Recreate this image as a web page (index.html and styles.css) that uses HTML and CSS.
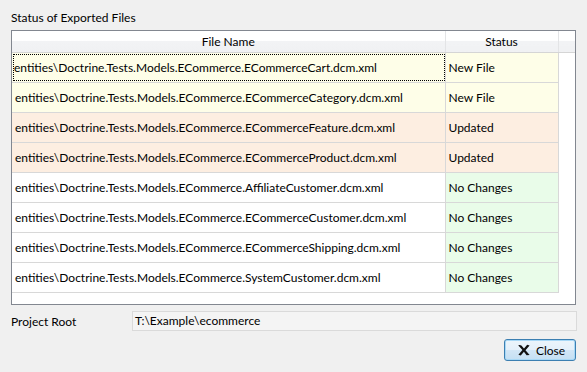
FILE: index.html
```html
<!DOCTYPE html>
<html lang="en">
<head>
  <meta charset="UTF-8" />
  <title>Export Status</title>
  <link rel="stylesheet" href="styles.css">
</head>
<body>
  <div class="dialog">
    <div class="group-label">Status of Exported Files</div>
    <div class="grid">
      <table>
        <colgroup>
          <col class="col-name">
          <col class="col-status">
          <col>
        </colgroup>
        <thead>
          <tr>
            <th>File Name</th>
            <th>Status</th>
            <th></th>
          </tr>
        </thead>
        <tbody>
          <tr class="new">
            <td><span class="focus">entities\Doctrine.Tests.Models.ECommerce.ECommerceCart.dcm.xml</span></td>
            <td>New File</td>
            <td class="filler"></td>
          </tr>
          <tr class="new">
            <td>entities\Doctrine.Tests.Models.ECommerce.ECommerceCategory.dcm.xml</td>
            <td>New File</td>
            <td class="filler"></td>
          </tr>
          <tr class="updated">
            <td>entities\Doctrine.Tests.Models.ECommerce.ECommerceFeature.dcm.xml</td>
            <td>Updated</td>
            <td class="filler"></td>
          </tr>
          <tr class="updated">
            <td>entities\Doctrine.Tests.Models.ECommerce.ECommerceProduct.dcm.xml</td>
            <td>Updated</td>
            <td class="filler"></td>
          </tr>
          <tr class="same">
            <td>entities\Doctrine.Tests.Models.ECommerce.AffiliateCustomer.dcm.xml</td>
            <td>No Changes</td>
            <td class="filler"></td>
          </tr>
          <tr class="same">
            <td>entities\Doctrine.Tests.Models.ECommerce.ECommerceCustomer.dcm.xml</td>
            <td>No Changes</td>
            <td class="filler"></td>
          </tr>
          <tr class="same">
            <td>entities\Doctrine.Tests.Models.ECommerce.ECommerceShipping.dcm.xml</td>
            <td>No Changes</td>
            <td class="filler"></td>
          </tr>
          <tr class="same">
            <td>entities\Doctrine.Tests.Models.ECommerce.SystemCustomer.dcm.xml</td>
            <td>No Changes</td>
            <td class="filler"></td>
          </tr>
        </tbody>
      </table>
    </div>
    <div class="field-row">
      <label>Project Root</label>
      <div class="textbox">T:\Example\ecommerce</div>
    </div>
    <div class="buttons">
      <button class="close-btn">
        <svg width="14" height="12" viewBox="0 0 14 12">
          <path d="M1.2 1.2 Q3 0.6 4.4 1.4 L7 4.6 L10.2 0.8 L12.6 1.4 L8.5 6.2 L12.6 11 L9.6 11.2 L6.9 7.8 L3.8 11.4 L1.4 10.8 L5.4 6.1 Z" fill="#111"/>
        </svg>
        Close
      </button>
    </div>
  </div>
</body>
</html>
```

FILE: styles.css
```css
body {
  margin: 0;
  background-color: #f0f0f0;
  font-family: Lato, 'Noto Sans', sans-serif;
  font-size: 12px;
  color: #000;
}

.dialog {
  display: flex;
  flex-direction: column;
  padding: 9px 11px 0 11px;
}

.group-label {
  height: 21px;
  line-height: 17px;
}

.grid {
  height: 273px;
  border: 1px solid #828790;
  background-color: #fff;
  overflow: hidden;
}

table {
  width: 100%;
  border-collapse: collapse;
  table-layout: fixed;
}

.col-name {
  width: 433px;
}

.col-status {
  width: 113px;
}

th {
  height: 21px;
  padding: 0;
  font-weight: normal;
  text-align: center;
  background: linear-gradient(#ffffff 0%, #ffffff 45%, #f2f3f5 50%, #f0f1f3 100%);
  border-right: 1px solid #e3e4e6;
  border-bottom: 1px solid #d5d5d5;
}

th:last-child {
  border-right: none;
}

td {
  height: 29px;
  padding: 0 0 0 3px;
  white-space: nowrap;
  overflow: hidden;
  border-right: 1px solid #d8d8d8;
  border-bottom: 1px solid #d8d8d8;
}

.new td {
  background-color: #fefee8;
}

.updated td {
  background-color: #fdeee1;
}

.same td:nth-child(2) {
  background-color: #e9fce9;
}

td.filler {
  border-right: none;
  border-bottom: none;
  background-color: #fff;
}

.focus {
  display: block;
  margin-left: -2px;
  padding-left: 1px;
  line-height: 27px;
  outline: 1px dotted #000;
  outline-offset: -1px;
}

.field-row {
  display: flex;
  align-items: center;
  margin-top: 6px;
  height: 20px;
}

.field-row label {
  width: 121px;
}

.textbox {
  flex: 1;
  height: 18px;
  line-height: 18px;
  padding-left: 2px;
  border: 1px solid #dadada;
  background-color: #f4f4f4;
  margin-right: -1px;
}

.buttons {
  display: flex;
  justify-content: flex-end;
  margin-top: 8px;
}

.close-btn {
  display: flex;
  align-items: center;
  justify-content: center;
  gap: 5px;
  width: 72px;
  height: 22px;
  padding: 0 0 0 2px;
  font-family: inherit;
  font-size: 12px;
  color: #000;
  border: 1px solid #3c7fb1;
  border-radius: 3px;
  background: linear-gradient(#ecf5fb 0%, #e4f0fa 50%, #d2e6f6 52%, #c4dff3 100%);
  box-shadow: inset 0 0 0 1px #a8d8f6;
}
```
